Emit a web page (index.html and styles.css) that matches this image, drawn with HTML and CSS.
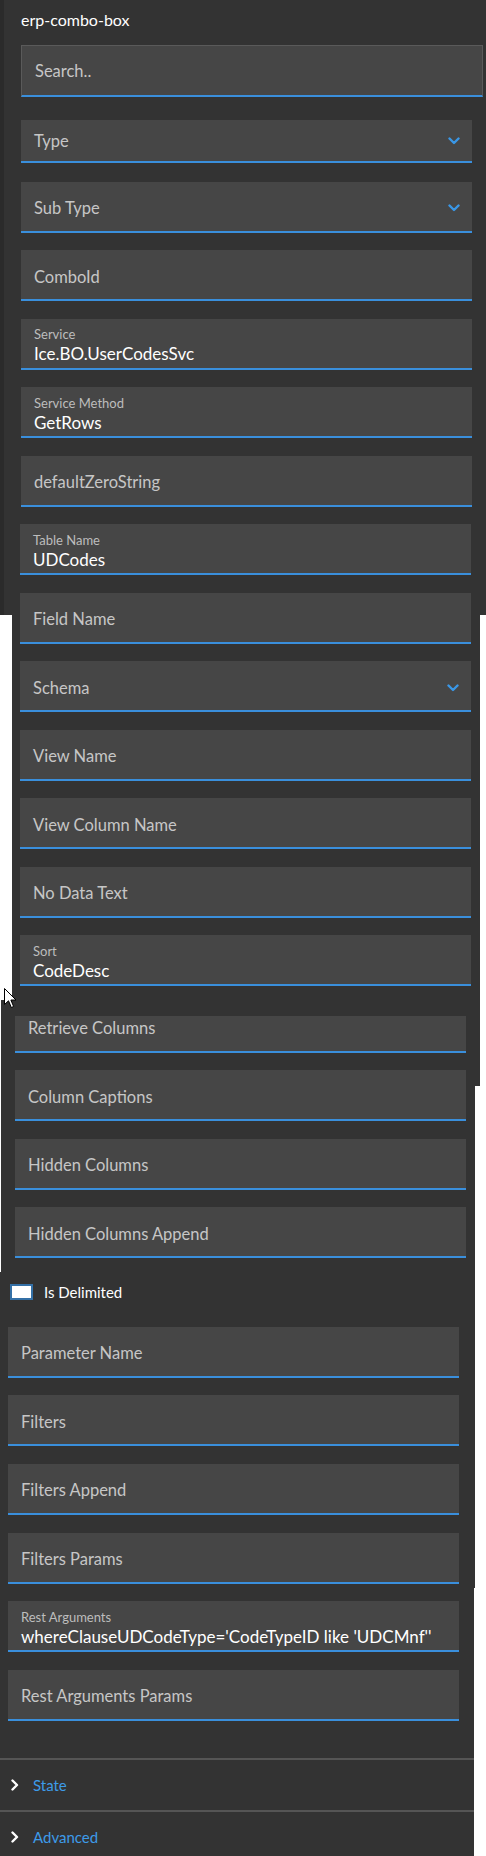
FILE: index.html
```html
<!DOCTYPE html>
<html>

<head>
    <title>erp-combo-box</title>
    <link rel="stylesheet" href="styles.css">
</head>

<body>

    <div class="panel">
        <div class="title">erp-combo-box</div>
        <div class="search"><span class="ph">Search..</span></div>

        <div class="grp grp-a">
            <div class="fld short"><span class="ph">Type</span><svg class="chev" width="12" height="8" viewBox="0 0 12 8"><polyline points="1.5,1.5 6,6 10.5,1.5" /></svg></div>
            <div class="fld"><span class="ph">Sub Type</span><svg class="chev" width="12" height="8" viewBox="0 0 12 8"><polyline points="1.5,1.5 6,6 10.5,1.5" /></svg></div>
            <div class="fld"><span class="ph">ComboId</span></div>
            <div class="fld filled"><span class="lbl">Service</span><span class="val">Ice.BO.UserCodesSvc</span></div>
            <div class="fld filled"><span class="lbl">Service Method</span><span class="val">GetRows</span></div>
            <div class="fld"><span class="ph">defaultZeroString</span></div>
        </div>

        <div class="grp grp-b">
            <div class="fld filled"><span class="lbl">Table Name</span><span class="val">UDCodes</span></div>
            <div class="fld"><span class="ph">Field Name</span></div>
            <div class="fld"><span class="ph">Schema</span><svg class="chev" width="12" height="8" viewBox="0 0 12 8"><polyline points="1.5,1.5 6,6 10.5,1.5" /></svg></div>
            <div class="fld"><span class="ph">View Name</span></div>
            <div class="fld"><span class="ph">View Column Name</span></div>
            <div class="fld"><span class="ph">No Data Text</span></div>
            <div class="fld filled"><span class="lbl">Sort</span><span class="val">CodeDesc</span></div>
        </div>

        <div class="grp grp-c">
            <div class="fld cut"><span class="ph">Retrieve Columns</span></div>
            <div class="fld"><span class="ph">Column Captions</span></div>
            <div class="fld"><span class="ph">Hidden Columns</span></div>
            <div class="fld"><span class="ph">Hidden Columns Append</span></div>
        </div>

        <div class="check-row">
            <span class="box"></span>
            <span class="check-label">Is Delimited</span>
        </div>

        <div class="grp grp-d">
            <div class="fld"><span class="ph">Parameter Name</span></div>
            <div class="fld"><span class="ph">Filters</span></div>
            <div class="fld"><span class="ph">Filters Append</span></div>
            <div class="fld"><span class="ph">Filters Params</span></div>
            <div class="fld filled"><span class="lbl">Rest Arguments</span><span class="val">whereClauseUDCodeType='CodeTypeID like 'UDCMnf''</span></div>
            <div class="fld"><span class="ph">Rest Arguments Params</span></div>
        </div>

        <div class="sections">
            <div class="sec"><svg class="arrow" width="8" height="12" viewBox="0 0 8 12"><polyline points="1.5,1.5 6,6 1.5,10.5" /></svg><span>State</span></div>
            <div class="sec"><svg class="arrow" width="8" height="12" viewBox="0 0 8 12"><polyline points="1.5,1.5 6,6 1.5,10.5" /></svg><span>Advanced</span></div>
        </div>

        <svg class="cursor" width="13" height="21" viewBox="0 0 13 21"><path d="M0.5,0.5 L0.5,16.5 L4.5,12.8 L7.3,19.5 L9.6,18.5 L6.9,12 L12,12 Z" /></svg>
    </div>

</body>

</html>
```

FILE: styles.css
```css
body {
    margin: 0;
    background: #fff;
    font-family: Lato, "Liberation Sans", sans-serif;
}

/* the screenshot is stitched from several scroll positions, the white strips are its seams */
.panel {
    position: relative;
    width: 486px;
    height: 1856px;
    overflow: hidden;
    background:
        linear-gradient(#2b2b2b, #2b2b2b) 0 0 / 4px 615px no-repeat,
        linear-gradient(#fff, #fff) 0 615px / 12px 385px no-repeat,
        linear-gradient(#fff, #fff) 480px 615px / 6px 471px no-repeat,
        linear-gradient(#fff, #fff) 0 1000px / 1px 272px no-repeat,
        linear-gradient(#fff, #fff) 475px 1086px / 11px 502px no-repeat,
        linear-gradient(#fff, #fff) 474px 1588px / 12px 268px no-repeat,
        #333;
}

.title {
    padding: 10px 0 0 21px;
    font-size: 16px;
    line-height: 20px;
    color: #fff;
}

.search {
    margin: 15px 0 0 21px;
    width: 462px;
    height: 52px;
    box-sizing: border-box;
    border: 1px solid #5a5a5a;
    border-bottom: 2px solid #3a8fdc;
    background: #464646;
    padding-left: 13px;
    display: flex;
    align-items: center;
}

.grp {
    display: flex;
    flex-direction: column;
    gap: 17.5px;
    width: 451px;
}

.grp-a {
    margin: 23px 0 0 21px;
}

.grp-b {
    margin: 17.5px 0 0 20px;
}

.grp-c {
    margin: 29.5px 0 0 15px;
}

.grp-d {
    margin: 17.5px 0 0 8px;
    gap: 17.7px;
}

.fld {
    height: 51px;
    box-sizing: border-box;
    background: #464646;
    border-bottom: 2px solid #3a8fdc;
    padding: 4px 12px 0 13px;
    display: flex;
    align-items: center;
}

.fld.short {
    height: 43px;
    padding-top: 0;
    margin-bottom: 1px;
}

.fld.cut {
    height: 37px;
    align-items: flex-start;
    padding-top: 2.3px;
}

.fld.filled {
    flex-direction: column;
    align-items: flex-start;
    padding-top: 8.5px;
}

.ph {
    flex: 1;
    font-size: 16.5px;
    line-height: 20px;
    color: #c6c6c6;
}

.lbl {
    font-size: 13px;
    line-height: 15px;
    color: #bdbdbd;
}

.val {
    margin-top: 2px;
    font-size: 17px;
    line-height: 20px;
    color: #fff;
    white-space: nowrap;
}

.chev polyline,
.arrow polyline {
    fill: none;
    stroke-width: 2.4;
    stroke-linecap: round;
    stroke-linejoin: round;
}

.chev polyline {
    stroke: #3a97e6;
}

.arrow polyline {
    stroke: #fff;
}

.check-row {
    margin: 17.5px 0 0 10px;
    height: 33.5px;
    display: flex;
    align-items: center;
    gap: 11px;
}

.box {
    width: 23px;
    height: 16px;
    box-sizing: border-box;
    border: 2px solid #3470a6;
    background: #fff;
}

.check-label {
    font-size: 15px;
    color: #fff;
}

.sections {
    margin-top: 37px;
    width: 474px;
}

.sec {
    height: 52px;
    box-sizing: border-box;
    border-top: 2px solid #555;
    padding-left: 11px;
    display: flex;
    align-items: center;
    gap: 14px;
    font-size: 15px;
    color: #3d9be9;
}

.cursor {
    position: absolute;
    left: 4px;
    top: 988px;
}

.cursor path {
    fill: #fff;
    stroke: #000;
    stroke-width: 1;
}
```
